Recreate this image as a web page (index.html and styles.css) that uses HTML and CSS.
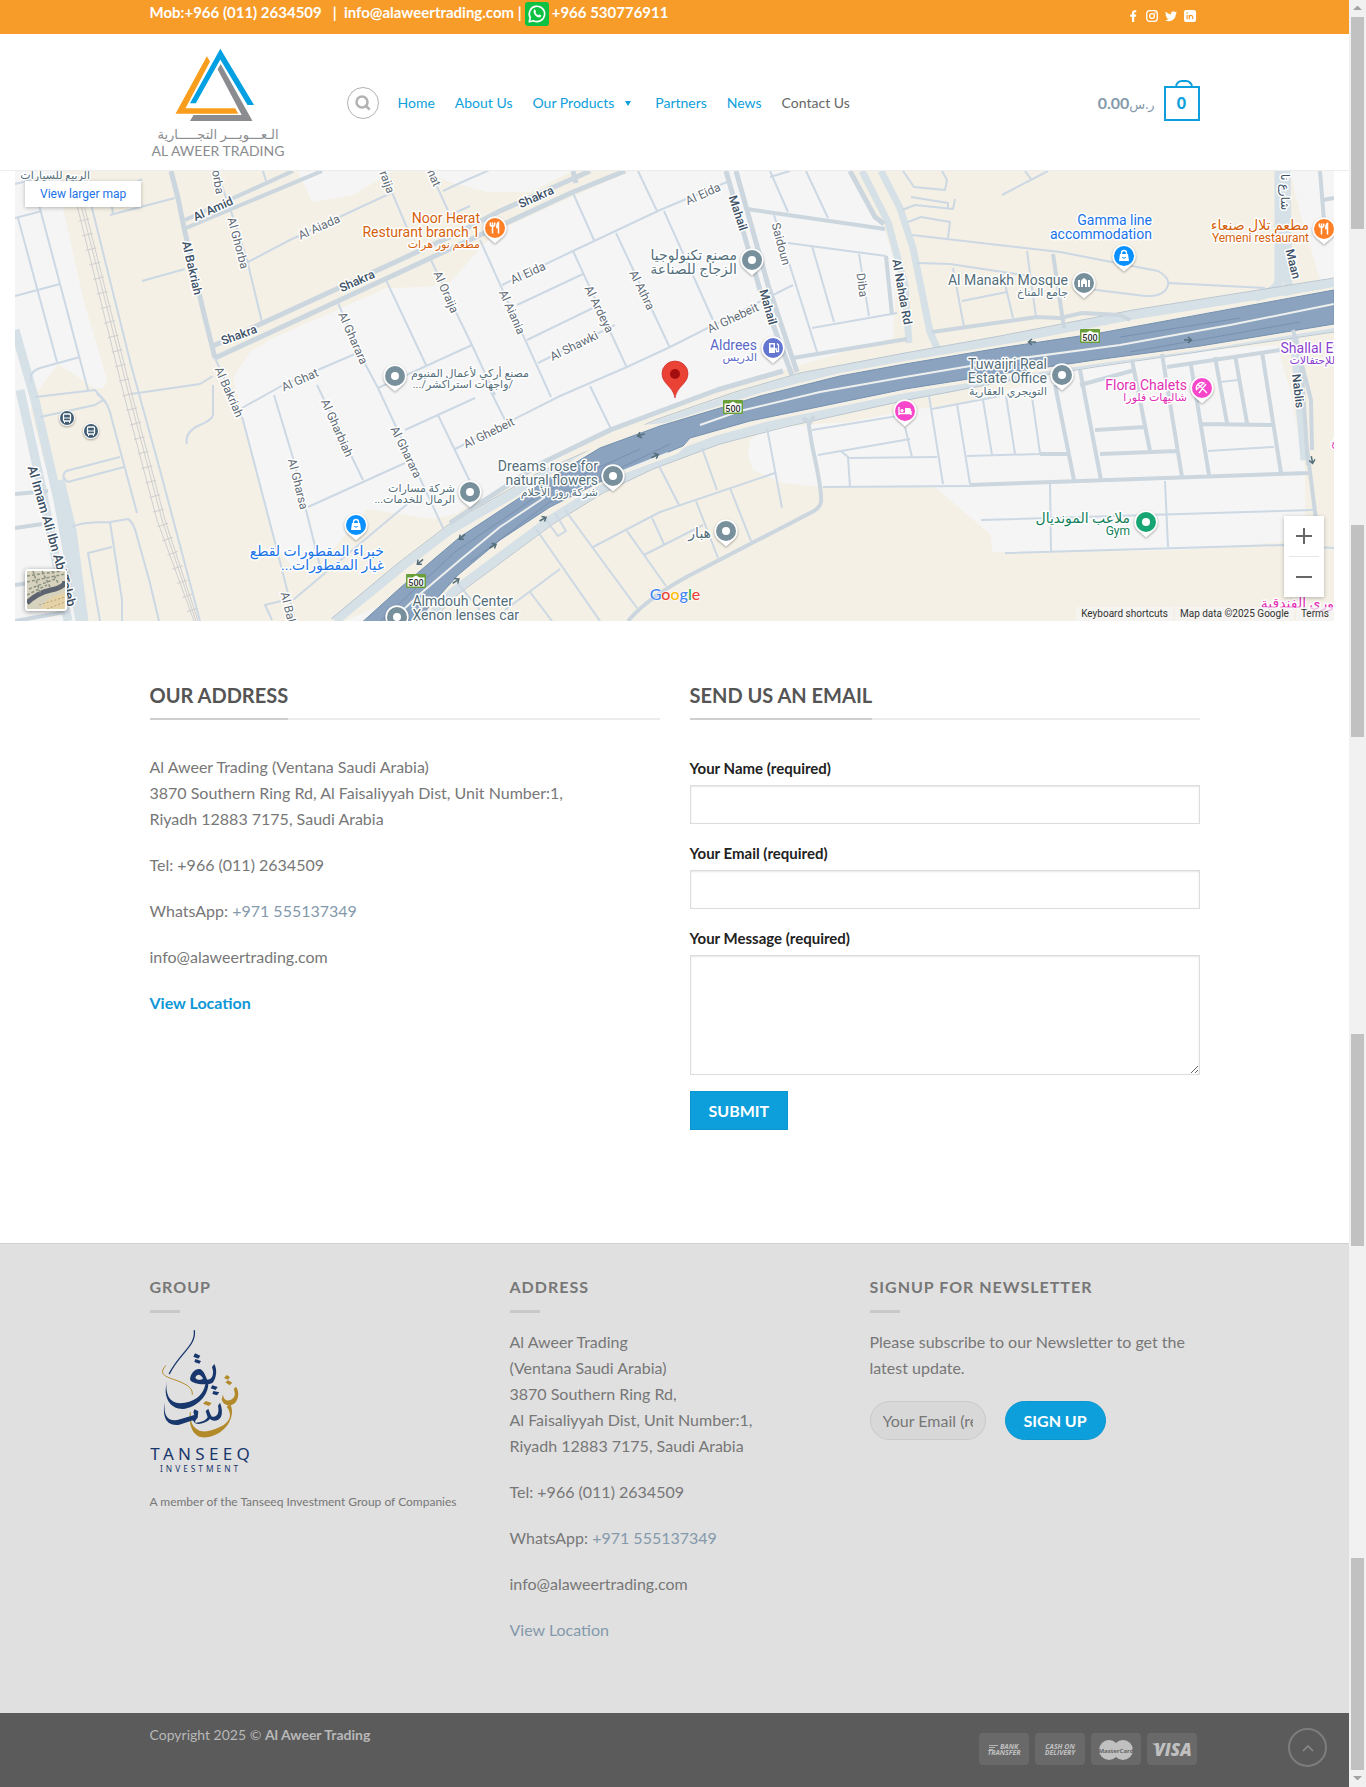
FILE: index.html
```html
<!DOCTYPE html>
<html lang="en">
<head>
<meta charset="utf-8">
<meta name="viewport" content="width=device-width, initial-scale=1">
<title>Contact Us - Al Aweer Trading</title>
<link rel="stylesheet" href="styles.css">
</head>
<body>
<div class="page">
  <div class="topbar">
    <div class="container topbar-row">
      <p class="topbar-contact"><span>Mob:+966 (011) 2634509 &nbsp; | &nbsp;info@alaweertrading.com |</span>
        <svg class="whatsapp" viewBox="0 0 24 24" aria-hidden="true"><rect width="24" height="24" rx="3" fill="#0dc143"/><path d="M4.2 19.8l1.1-4A7.7 7.7 0 1 1 8.300 18.700z" fill="none" stroke="#fff" stroke-width="1.600" stroke-linejoin="round"/><path d="M9.200 7.800c.5-.5 1-.3 1.200.2l.6 1.400c.2.5-.6 1-.5 1.300.6 1.200 1.500 2 2.700 2.500.4.1.9-.9 1.300-.7l1.500.8c.5.3.1 1.300-.5 1.800-1.200.9-3.600 0-5.200-1.600S7.900 9 9.200 7.800z" fill="#fff"/></svg>
        <span>+966 530776911</span></p>
      <div class="social">
        <a href="#" aria-label="Facebook"><svg viewBox="0 0 12 12"><path d="M5 12V6.700H3.200V4.600H5V3.100C5 1.200 6 .2 7.700.2h1.500v2H8.100c-.7 0-.9.3-.9 1v1.400h2l-.3 2.100H7.200V12z"/></svg></a>
        <a href="#" aria-label="Instagram"><svg viewBox="0 0 12 12"><rect x=".7" y=".7" width="10.600" height="10.600" rx="2.800" fill="none" stroke="#fff" stroke-width="1.300"/><circle cx="6" cy="6" r="2.400" fill="none" stroke="#fff" stroke-width="1.300"/><circle cx="9" cy="3" r=".8"/></svg></a>
        <a href="#" aria-label="Twitter"><svg viewBox="0 0 12 12"><path d="M12 2.500c-.4.200-.9.300-1.400.4.500-.3.900-.8 1.100-1.400-.5.300-1 .5-1.600.6A2.500 2.500 0 0 0 5.900 4.400 7 7 0 0 1 .8 1.800c-.7 1.200-.3 2.600.8 3.300-.4 0-.8-.1-1.100-.3 0 1.200.8 2.200 2 2.500-.4.100-.7.100-1.100 0 .3 1 1.200 1.700 2.300 1.700A5 5 0 0 1 0 10.100 7 7 0 0 0 10.800 3.900z"/></svg></a>
        <a href="#" aria-label="LinkedIn"><svg viewBox="0 0 12 12"><rect width="12" height="12" rx="2"/><path d="M3.100 5v4.300M5.300 9.300V5M5.300 7.200c0-2.200 3.400-2.500 3.400 0v2.100" fill="none" stroke="#f89c29" stroke-width="1.200"/><circle cx="3.100" cy="3.100" r=".8" fill="#f89c29"/></svg></a>
      </div>
    </div>
  </div>

  <header class="header">
    <div class="container header-row">
      <a class="logo" href="#" aria-label="Al Aweer Trading">
        <svg viewBox="150 47 136 112">
          <path fill="#f99d1c" d="M206.900 56.300L210 61.500 185.500 108.200H235.200L238.300 113.700H175.500z"/>
          <path fill="#00a0e3" d="M220.300 48.700L254 105H247.500L220.300 59.500 195.800 103.300H190z"/>
          <path fill="#8a8c8f" d="M220.700 64L252.500 121H190L193.500 115H241.700L217.600 69.300z"/>
          <text class="logo-text" x="218" y="139" font-size="13">الـعـــويـــر التجـــــارية</text>
          <text class="logo-text" x="218" y="156" font-size="14">AL AWEER TRADING</text>
        </svg>
      </a>
      <button class="search" aria-label="Search"><svg viewBox="0 0 16 16"><circle cx="7" cy="7" r="5.500"/><path d="M10.500 10.500l4.200 4.200"/></svg></button>
      <nav class="nav">
        <a href="#">Home</a>
        <a href="#">About Us</a>
        <a href="#">Our Products<span class="caret"></span></a>
        <a href="#">Partners</a>
        <a href="#">News</a>
        <a href="#" class="current">Contact Us</a>
      </nav>
      <a class="cart" href="#"><bdi dir="rtl">0.00<span>ر.س</span></bdi><strong class="bag">0</strong></a>
    </div>
  </header>

  <main>
    <section class="map" aria-label="Map">
      <svg class="map-canvas" viewBox="15 171 1319 450" preserveAspectRatio="xMidYMid slice">
        <defs>
          <path id="drop" d="M0 15.500L-7.500 9A11.700 11.700 0 1 1 7.500 9z"/>
          <g id="dot"><use href="#drop" fill="#fff" class="lift"/><circle r="10" fill="#78909c"/><circle r="4" fill="#fff"/></g>
          <g id="lock"><use href="#drop" fill="#fff" class="lift"/><circle r="10" fill="#0a91ff"/><path fill="#fff" d="M-5 5l1-7h8l1 7z"/><path fill="none" stroke="#fff" stroke-width="1.300" d="M-2.500-1.500V-3a2.500 2.500 0 0 1 5 0v1.500"/><path fill="none" stroke="#0a91ff" d="M-1.800 1a2 2 0 0 0 3.600 0"/></g>
          <g id="food"><use href="#drop" fill="#fff" class="lift"/><circle r="10" fill="#ff7f27"/><path fill="none" stroke="#fff" stroke-width="1.500" d="M-2.500-5.500V5.500M-4.700-5.500v2.300q0 1.500 2.200 1.500T-.3-3.200v-2.300M3.500 5.500v-11Q1.800-4.500 1.800-.5h1.700"/></g>
          <g id="bus"><circle r="8" fill="#fff" class="lift"/><circle r="7" fill="#3f5b72"/><rect x="-3.500" y="-4" width="7" height="7" rx="1" fill="none" stroke="#fff" stroke-width="1.300"/><path stroke="#fff" d="M-3.500 0h7M-2.500 3v2M2.500 3v2"/></g>
          <g id="shield"><rect x="-10" y="-7" width="20" height="14" rx="1" fill="#689f38"/><path fill="#fff" d="M-8.500 5.500v-9l5 0 3.500-2 3.500 2h5v9z"/><text text-anchor="middle" y="5" class="shield-no">500</text></g>
          <path id="arrow" fill="none" stroke="#546e7a" stroke-width="1.500" d="M-4 0h7M0-3l3.500 3L0 3"/>
        </defs>
        <rect x="15" y="171" width="1319" height="450" fill="#f5f5f5"/>
        <g fill="#f4f0e5">
          <path d="M58 171L63 208 83 298 107 380 104 388 95 388 75 375 58 364 38 391 30 410 60 520 85 621H345L450 575 460 513 433 519 367 509 333 550 293 567 277 550 233 378 250 352 273 338 387 288 427 287 450 282 463 268 483 245 510 225 630 171H573L530 192 487 192 450 182 420 171H393L353 195 312 202 298 171z"/>
          <path d="M390 621L460 510 610 432 717 392 800 365 893 338 897 270 883 225 850 171H1290L1300 212 1320 280 1334 282V621z"/>
        </g>
        <path fill="#f5f5f5" d="M750 440L767 428 817 424 850 422 910 410 960 404 1080 368 1167 353 1277 345 1290 390 1305 470V537L1283 542 1180 550 992 552 991 535 935 487H823L783 483 753 470 748 455z"/>
        <g class="road light">
          <path class="w9" d="M15 330L35 400 58 500 80 621M20 390L40 480 68 621M60 480L72 530 84 621"/>
          <path class="w7" d="M862 171L888 222 905 285 909 343M881 171L900 208 913 248 930 332 938 350"/>
          <path class="w9" d="M1279 171V280Q1278 292 1255 297M1286 171L1288 290 1295 345 1305 460"/>
          <path class="w9" d="M335 621L400 568 450 530 540 478 610 447 657 425 737 397 800 378 905 358 1000 341 1133 315 1334 283"/>
          <path class="w9" d="M427 618L450 594 550 520 600 489 650 465 717 440 783 422 905 396 1000 378 1093 362 1334 327"/>
        </g>
        <path class="edge" d="M331 619L397 564 448 525 538 473 608 442 655 420 735 392 800 373 905 353 1000 336 1133 310 1334 278M433 621L453 598 553 524 603 493 653 469 720 444 785 427 907 400 1002 382 1095 367 1334 332"/>
        <g class="highway">
          <path class="rim" d="M358 626L400 584 460 534 545 478 600 443 640 425 665 423 760 393 840 373 905 361 1000 345 1100 330 1334 287V328L1200 350 1095 364 1000 378 905 393 750 425 692 441 677 454 620 475 555 508 500 543 460 577 420 622z"/>
          <path class="deck" d="M358 626L400 588 460 537 545 481 600 448 660 426 760 396 840 376 905 364 1000 348 1100 333 1334 290V324L1200 346 1095 360 1000 374 905 389 750 421 690 438 683 446 620 472 550 507 500 540 458 575 412 626z"/>
          <path class="median" d="M386 626L420 594 460 560 500 527 545 497M623 471L668 453M700 425L740 411 820 392 905 377 1000 361 1120 345 1230 325 1334 304"/>
          <path class="lane" d="M375 626L455 552 540 494 640 449M470 562L550 502 670 444M1120 337L1240 318M1130 352L1300 322"/>
        </g>
        <g class="road">
          <path class="w5" d="M171 171L178 198 184 228 203 310 215 358"/>
          <path class="w5" d="M213 346L454 235 500 211 590 171M215 358L450 249 573 192 625 171M573 171l3 12"/>
          <path class="w4" d="M185 220L293 171M186 228L322 171M747 209L885 229M793 358L907 339M932 332L1037 317 1060 318 1082 313 1120 315 1130 320"/>
          <path class="w5" d="M450 523L540 464 610 430 717 390 783 371"/>
          <path class="w5" d="M726 171L760 290 792 375M736 171L768 285 797 372M850 171L875 217 884 224"/>
          <path class="w4" d="M886 256L892 315M1053 254L1064 328M15 494L48 491M15 528L42 524M15 585L50 580M15 621L65 612M1320 171l4 50M1323 200l11-2"/>
          <path class="w4" d="M808 420Q811 440 813 450 822 490 821 502 820 508 812 512L700 570Q650 595 628 621M803 418l7 5 4-7"/>
          <path class="w4" d="M970 485L1308 473M1040 454H1069M1095 430L1145 427M1100 454L1177 451M1200 424L1272 425M1055 385L1074 480M1080 370L1101 480M1132 360L1150 451M1162 354L1182 477M1191 365L1209 475M1215 357L1227 423M1235 355L1247 423M1262 352L1281 473M1080 385L1135 370M1167 367L1280 350M1306 440L1316 520M1293 330L1311 400 1312 450M1300 345L1308 465"/>
        </g>
        <g class="road thin">
          <path d="M215 358L243 420 277 550 295 621M216 171L229 205 247 260 262 322M248 262L290 240 391 193M383 171L410 235M430 171L450 215 470 206M443 191l17-8 50-22M263 171l3 10"/>
          <path d="M15 218L42 211M18 218L57 362M39 205L60 284 88 390M15 296L60 284M31 383Q28 372 40 368L80 357M15 184l40-10M110 215L175 198M113 213L110 197 142 179M142 281L185 269"/>
          <path d="M90 200L131 365 160 470 200 621M131 394L200 384 213 376M35 397L95 390 105 402M40 417L95 405 103 400M213 385V415Q212 420 200 425 184 432 187 444"/>
          <path d="M97 394Q108 400 112 420L137 513M120 457L66 471Q60 477 68 482L124 467M72 527Q80 522 110 522L128 519Q134 522 138 540 150 580 159 621M110 522L122 600V621M112 547L88 553 100 621M285 600L265 605 272 620"/>
          <path d="M338 303L363 360 378 388 444 530M386 280L426 365M242 408L285 384 355 354M378 388L472 345M431 260L450 300 472 345 495 395M274 395L293 458 321 570M317 385L363 480M308 507L405 463M405 430L475 398M438 415L475 492M490 390L505 420M293 600L412 500"/>
          <path d="M502 285L573 251 660 210 727 182M480 240L551 397M573 193L594 240M638 171L657 211M664 211L713 320M616 233L670 348M573 251L627 368M517 305L583 274M527 340L597 306M538 363L615 325M455 449L560 396 627 367 670 347 793 285M590 386L611 429"/>
          <path d="M770 171L788 212M806 171L828 218M770 177L790 171M774 215L817 352M788 243L886 256M812 246L834 322M859 254L869 316M812 328L897 313"/>
          <path d="M903 171L914 187 945 190 947 180 942 171M902 210L915 205 953 209 955 199M911 197L948 203V208M908 222L921 217 950 222 948 238M912 235L1060 252 1158 271Q1170 278 1168 285 1165 297 1145 296L1080 288M1169 283L1265 288M1002 195L1048 171M1025 171L1031 179M917 263L950 264 1030 276M953 268L964 327M962 301L1007 292M1002 271L1013 318M1027 251L1036 317"/>
          <path d="M823 487L970 486M967 456L1040 454M1208 451L1274 447M929 396L943 484M957 404L970 484M983 400L992 455M1006 396L1015 454M1031 390L1040 453M932 409L1000 396M905 427L912 457M1050 484L1051 551M1165 481L1168 547M981 520L1314 510M1005 553L1284 545 1334 548M1220 382L1238 380"/>
          <path d="M812 430L910 414M818 455L910 439M841 451L848 457 850 487M848 458L937 457M767 428L782 508M593 547L660 512 775 473M702 448L717 490M659 466L679 505M730 488L751 541M696 501L718 558M652 518L664 544M644 555L703 525M627 531L666 586M565 510L637 608M536 529L600 621M505 610L560 569M530 592L552 621M458 584L480 610M546 520L558 536 566 531 555 513"/>
        </g>
        <g class="rail"><path d="M77 205L124 395 157 520 194 621M81 205L129 395 162 520 196 621M84 205L132 395 165 520 198 621"/><path class="ties" d="M80 205L128 395 161 520 196 621"/></g>
        <use href="#arrow" transform="translate(641 435) rotate(160)"/><use href="#arrow" transform="translate(655 456) rotate(-25)"/>
        <use href="#arrow" transform="translate(543 519) rotate(-30)"/><use href="#arrow" transform="translate(493 546) rotate(-30)"/>
        <use href="#arrow" transform="translate(462 537) rotate(140)"/><use href="#arrow" transform="translate(456 581) rotate(-35)"/>
        <use href="#arrow" transform="translate(420 562) rotate(140)"/><use href="#arrow" transform="translate(1032 342) rotate(180)"/>
        <use href="#arrow" transform="translate(1188 340)"/><use href="#arrow" transform="translate(1312 460) rotate(80)"/>

        <g class="street">
          <text transform="translate(218 182) rotate(80)">orba</text><text transform="translate(238 243) rotate(75)">Al Ghorba</text>
          <text transform="translate(319 227) rotate(-24)">Al Aiada</text><text transform="translate(353 338) rotate(66)">Al Gharara</text>
          <text transform="translate(446 292) rotate(66)">Al Oraija</text><text transform="translate(300 380) rotate(-24)">Al Ghat</text>
          <text transform="translate(229 392) rotate(66)">Al Bakriah</text><text transform="translate(387 182) rotate(70)">raija</text>
          <text transform="translate(434 178) rotate(66)">hat</text><text transform="translate(337 428) rotate(66)">Al Gharbiah</text>
          <text transform="translate(406 452) rotate(64)">Al Gharara</text><text transform="translate(298 484) rotate(76)">Al Gharsa</text>
          <text transform="translate(288 607) rotate(76)">Al Bal</text><text transform="translate(703 194) rotate(-24)">Al Eida</text>
          <text transform="translate(528 273) rotate(-24)">Al Eida</text><text transform="translate(512 312) rotate(66)">Al Aiania</text>
          <text transform="translate(599 309) rotate(64)">Al Ardeya</text><text transform="translate(642 290) rotate(64)">Al Athra</text>
          <text transform="translate(574 346) rotate(-26)">Al Shawki</text><text transform="translate(733 318) rotate(-25)">Al Ghebeit</text>
          <text transform="translate(489 433) rotate(-26)">Al Ghebeit</text><text transform="translate(781 244) rotate(75)">Saidoun</text>
          <text transform="translate(862 285) rotate(83)">Diba</text>
        </g>
        <g class="street major">
          <text transform="translate(213 209) rotate(-24)">Al Amid</text><text transform="translate(192 268) rotate(77)">Al Bakriah</text>
          <text transform="translate(357 281) rotate(-24)">Shakra</text><text transform="translate(239 335) rotate(-20)">Shakra</text>
          <text transform="translate(536 197) rotate(-24)">Shakra</text><text transform="translate(738 213) rotate(72)">Mahail</text>
          <text transform="translate(768 307) rotate(74)">Mahail</text><text transform="translate(902 292) rotate(80)">Al Nahda Rd</text>
          <text transform="translate(1293 264) rotate(76)">Maan</text><text transform="translate(1298 391) rotate(83)">Nablis</text>
          <text transform="translate(1285 192) rotate(90)">شارع نا</text><text transform="translate(52 536) rotate(74)" class="wide">Al Imam Ali Ibn Abi Taleb</text>
        </g>
        <g class="poi slate">
          <text class="ar" x="90" y="179">الربيع للسيارات</text>
          <text class="ar" x="529" y="377">مصنع أركي لأعمال المنيوم</text><text class="ar" x="513" y="388">/واجهات استراكشر/...</text>
          <text class="ar" x="455" y="492">شركة مسارات</text><text class="ar" x="455" y="503">الرمال للخدمات...</text>
          <text x="598" y="471">Dreams rose for</text><text x="598" y="485">natural flowers</text><text class="ar" x="598" y="496">شركة روز الأحلام</text>
          <text class="ar big" x="737" y="260">مصنع تكنولوجيا</text><text class="ar big" x="737" y="274">الزجاج للصناعة</text>
          <text class="ar big" x="711" y="538">هبار</text>
          <text x="1068" y="285">Al Manakh Mosque</text><text class="ar" x="1068" y="296">جامع المناخ</text>
          <text x="1047" y="369">Tuwaijri Real</text><text x="1047" y="383">Estate Office</text><text class="ar" x="1047" y="395">التويجري العقارية</text>
          <text x="513" y="606">Almdouh Center</text><text x="519" y="620">Xenon lenses car</text>
        </g>
        <g class="poi orange">
          <text x="480" y="223">Noor Herat</text><text x="480" y="237">Resturant branch 1</text><text class="ar" x="480" y="248">مطعم نور هرات</text>
          <text class="ar big" x="1309" y="230">مطعم تلال صنعاء</text><text class="small" x="1309" y="242">Yemeni restaurant</text>
        </g>
        <g class="poi blue">
          <text x="1152" y="225">Gamma line</text><text x="1152" y="239">accommodation</text>
          <text class="ar big" x="384" y="556">خبراء المقطورات لقطع</text><text class="ar big" x="384" y="570">غيار المقطورات...</text>
        </g>
        <g class="poi violet"><text x="757" y="350">Aldrees</text><text class="ar" x="757" y="361">الدريس</text></g>
        <g class="poi pink"><text x="1187" y="390">Flora Chalets</text><text class="ar" x="1187" y="401">شاليهات فلورا</text><text class="ar" x="1338" y="446">خ</text><text class="ar big" x="1334" y="608">وري الفندقية</text></g>
        <g class="poi purple"><text x="1340" y="353">Shallal Ev</text><text class="ar" x="1335" y="364">للإحتفالات</text></g>
        <g class="poi green"><text class="ar big" x="1130" y="523">ملاعب المونديال</text><text class="small" x="1130" y="535">Gym</text></g>

        <use href="#dot" x="395" y="376"/><use href="#dot" x="470" y="492"/><use href="#dot" x="613" y="476"/><use href="#dot" x="397" y="617"/>
        <use href="#dot" x="752" y="260"/><use href="#dot" x="726" y="531"/><use href="#dot" x="1062" y="375"/>
        <use href="#lock" x="1124" y="256"/><use href="#lock" x="356" y="525"/>
        <use href="#food" x="495" y="228"/><use href="#food" x="1324" y="229"/>
        <use href="#bus" x="67" y="418"/><use href="#bus" x="91" y="431"/>
        <use href="#shield" x="1090" y="336"/><use href="#shield" x="733" y="407"/><use href="#shield" x="416" y="581"/>
        <g transform="translate(1084 283)"><use href="#drop" fill="#fff" class="lift"/><circle r="10" fill="#78909c"/><path fill="#fff" d="M-6-3h2v7h-2zM4-3h2v7H4zM-3 4v-6q0-1 3-3 3 2 3 3v6H1V1h-2v3z"/></g>
        <g transform="translate(773 348)"><use href="#drop" fill="#fff" class="lift"/><circle r="10" fill="#6374d1"/><path fill="#fff" d="M-4-5h6V5h-6z"/><path fill="none" stroke="#fff" stroke-width="1.300" d="M2 1h1.500v2.500H5.500V-3L4-4.500"/><path fill="#6374d1" d="M-2.500-3.500h3v3h-3z"/></g>
        <g transform="translate(905 411)"><use href="#drop" fill="#fff" class="lift"/><circle r="10" fill="#f846cb"/><path fill="none" stroke="#fff" stroke-width="1.400" d="M-6-4v8M-6 2.500H6M6 4V0"/><path fill="#fff" d="M0-3h4q2 0 2 2v3H0z"/><circle cx="-3" cy="-.5" r="1.600" fill="#fff"/></g>
        <g transform="translate(1202 388)"><use href="#drop" fill="#fff" class="lift"/><circle r="10" fill="#f846cb"/><path fill="none" stroke="#fff" stroke-width="1.300" d="M-5.500 1.500A5.500 5.500 0 0 1 2-5zM-4-3.500l2.500 2.500M-1.500-1.500L5 5M4-4L-3 5"/></g>
        <g transform="translate(1146 522)"><use href="#drop" fill="#fff" class="lift"/><circle r="10" fill="#17a673"/><circle r="4" fill="#fff"/></g>
        <path d="M675 398C673 386 662 384 662 373.500A13 12.500 0 0 1 688 373.500C688 384 677 386 675 398z" fill="#ea4335" stroke="#c5221f" stroke-width=".6"/><circle cx="675" cy="374" r="5" fill="#a50e0e"/>
        <text class="google" x="675" y="600" text-anchor="middle"><tspan fill="#4285f4">G</tspan><tspan fill="#ea4335">o</tspan><tspan fill="#fbbc04">o</tspan><tspan fill="#4285f4">g</tspan><tspan fill="#34a853">l</tspan><tspan fill="#ea4335">e</tspan></text>
      </svg>
      <a class="map-larger" href="#">View larger map</a>
      <button class="map-satellite" aria-label="Show satellite imagery">
        <svg viewBox="0 0 38 38"><rect width="38" height="38" fill="#d6d2bd"/><path fill="#e6d3a5" d="M14 38Q18 26 38 22V38z"/><path fill="none" stroke="#5d6470" stroke-width="5" d="M0 32Q10 22 24 19T38 10"/><path fill="none" stroke="#8b9182" stroke-width="1.500" stroke-dasharray="3 2" d="M0 5L34 0M0 11L38 3M2 18L28 8M0 24L20 14M6 0L14 24M15 0L24 18M25 0L32 14"/><path fill="none" stroke="#b19f7e" stroke-dasharray="2 2" d="M12 34L38 26M20 38L38 31"/></svg>
      </button>
      <div class="map-zoom"><button aria-label="Zoom in"><svg viewBox="0 0 18 18"><path d="M9 1v16M1 9h16"/></svg></button><button aria-label="Zoom out"><svg viewBox="0 0 18 18"><path d="M1 9h16"/></svg></button></div>
      <div class="map-legal"><a href="#">Keyboard shortcuts</a><span>Map data ©2025 Google</span><a href="#">Terms</a></div>
    </section>

    <section class="container contact">
      <div class="contact-col">
        <h3 class="section-title"><span>OUR ADDRESS</span></h3>
        <div class="copy">
          <p>Al Aweer Trading (Ventana Saudi Arabia)<br>3870 Southern Ring Rd, Al Faisaliyyah Dist, Unit Number:1,<br>Riyadh 12883 7175, Saudi Arabia</p>
          <p>Tel: +966 (011) 2634509</p>
          <p>WhatsApp: <a href="#">+971 555137349</a></p>
          <p>info@alaweertrading.com</p>
          <p><a class="location" href="#">View Location</a></p>
        </div>
      </div>
      <div class="contact-col">
        <h3 class="section-title"><span>SEND US AN EMAIL</span></h3>
        <form class="mail-form">
          <label for="name">Your Name (required)</label>
          <input id="name" type="text">
          <label for="email">Your Email (required)</label>
          <input id="email" type="email">
          <label for="message">Your Message (required)</label>
          <textarea id="message"></textarea>
          <button class="btn" type="button">SUBMIT</button>
        </form>
      </div>
    </section>
  </main>

  <footer>
    <div class="widgets">
      <div class="container widget-row">
        <div class="widget">
          <h4>GROUP</h4>
          <svg class="tanseeq" viewBox="60 294 306 441" role="img" aria-label="Tanseeq Investment">
            <g fill="none" stroke-linecap="round">
              <g stroke="#b28a2a">
                <path stroke-width="3" d="M107 404C88 425 98 434 130 445S190 468 187 490"/>
                <path stroke-width="3" d="M181 545C176 580 190 602 212 608"/>
              </g>
              <path stroke="#18376c" stroke-width="4" d="M193 299C198 345 150 365 118 428"/>
            </g>
            <g fill="#b28a2a">
              <path d="M181 560C185 590 205 603 230 601 270 594 300 575 300 553 300 540 294 532 290 528L300 518C310 535 308 560 292 583 270 612 240 621 215 619 190 613 178 588 181 560z"/>
              <path d="M279 490C280 510 296 514 309 502 318 494 314 482 311 474L318 467C328 480 327 503 315 516 300 530 278 522 275 505z"/>
              <path d="M290 432l10 6-6 8-12-5zM286 454l8-6 13 7-8 8zM219 518l8-8 18 6-8 9z"/>
            </g>
            <g fill="#18376c">
              <path d="M110 448C105 490 118 516 150 517 190 515 220 495 226 460L235 456C236 495 200 530 158 534 122 534 106 505 107 475z"/>
              <path fill-rule="evenodd" d="M180 445C182 425 198 410 212 415 223 421 228 440 232 446 244 446 250 435 249 420L246 408 253 399C262 415 260 440 248 455 235 463 184 462 180 445zM196 440C202 449 213 447 219 443 213 431 202 426 196 440z"/>
              <path d="M104 516C100 560 118 574 150 565L193 552C189 545 190 540 194 535L205 541 203 560C196 568 192 574 198 575 215 574 228 568 233 559L227 540 235 533C242 552 244 559 252 557 264 554 268 542 264 524L270 515C278 535 279 558 265 566 253 572 245 568 240 564 230 575 207 582 196 577 190 573 192 566 184 569L148 581C110 587 96 558 104 516z"/>
              <path d="M195 367l16 7-6 9-15-6zM196 384l17 6-5 8-15-5zM247 463l16 5-6 9-15-5zM250 480l18 4-7 9-14-4z"/>
            </g>
            <text class="brand" x="61" y="687">TANSEEQ</text>
            <text class="brand-sub" x="90" y="722">INVESTMENT</text>
          </svg>
          <p class="caption">A member of the Tanseeq Investment Group of Companies</p>
        </div>
        <div class="widget copy">
          <h4>ADDRESS</h4>
          <p>Al Aweer Trading<br>(Ventana Saudi Arabia)<br>3870 Southern Ring Rd,<br>Al Faisaliyyah Dist, Unit Number:1,<br>Riyadh 12883 7175, Saudi Arabia</p>
          <p>Tel: +966 (011) 2634509</p>
          <p>WhatsApp: <a href="#">+971 555137349</a></p>
          <p>info@alaweertrading.com</p>
          <p><a href="#">View Location</a></p>
        </div>
        <div class="widget copy">
          <h4>SIGNUP FOR NEWSLETTER</h4>
          <p>Please subscribe to our Newsletter to get the latest update.</p>
          <form class="newsletter">
            <input type="email" placeholder="Your Email (required)" aria-label="Your Email (required)">
            <button class="btn round" type="button">SIGN UP</button>
          </form>
        </div>
      </div>
    </div>
    <div class="legal">
      <div class="container legal-row">
        <p>Copyright 2025 © <strong>Al Aweer Trading</strong></p>
        <div class="payments">
          <svg viewBox="0 0 50 32" role="img" aria-label="Bank transfer"><rect width="50" height="32" rx="4"/><path stroke="#b5b5b5" d="M10 12.500h9M10 14.500h6M10 16.500h4"/><text x="21" y="16" class="pay">BANK</text><text x="25" y="22" text-anchor="middle" class="pay">TRANSFER</text></svg>
          <svg viewBox="0 0 50 32" role="img" aria-label="Cash on delivery"><rect width="50" height="32" rx="4"/><text x="25" y="16" text-anchor="middle" class="pay">CASH ON</text><text x="25" y="22" text-anchor="middle" class="pay">DELIVERY</text></svg>
          <svg viewBox="0 0 50 32" role="img" aria-label="MasterCard"><rect width="50" height="32" rx="4"/><g fill="#c0c0c0"><circle cx="18" cy="17" r="10"/><circle cx="32" cy="17" r="10"/></g><text x="25" y="20" text-anchor="middle" class="pay mc">MasterCard</text></svg>
          <svg viewBox="0 0 50 32" role="img" aria-label="Visa"><rect width="50" height="32" rx="4"/><path fill="#c0c0c0" d="M5 10.500h6l2 5z"/><text x="26" y="23" text-anchor="middle" class="visa">VISA</text></svg>
        </div>
      </div>
      <a class="to-top" href="#" aria-label="Back to top"><svg viewBox="0 0 12 8"><path d="M1 7l5-5 5 5"/></svg></a>
    </div>
  </footer>
</div>
<div class="scrollbar" aria-hidden="true">
  <i class="arrow-up"></i><b></b><i class="gap-a"></i><b></b><i class="gap-a"></i><b></b><i class="gap-b"></i><b></b><i class="arrow-down"></i>
</div>
</body>
</html>
```
FILE: styles.css
```css
* { box-sizing: border-box; }
body {
  margin: 0;
  display: flex;
  background: #fff;
  color: #777;
  font: 16px/26px Lato, "DejaVu Sans", sans-serif;
}
p, h3, h4 { margin: 0; }
a { color: #8499ab; text-decoration: none; }
button { font: inherit; cursor: pointer; }
input, textarea { font: inherit; color: #333; }
.page { flex: 1; min-width: 0; }
.container { max-width: 1080px; margin: 0 auto; padding: 0 15px; }

/* Top bar */
.topbar { background: #f89c29; color: #fff; }
.topbar-row { display: flex; justify-content: space-between; height: 34px; }
.topbar-contact { display: flex; gap: 3px; font-size: 15px; font-weight: 700; line-height: 24px; }
.whatsapp { width: 24px; height: 24px; margin-top: 2px; }
.social { display: flex; align-items: center; gap: 7px; padding: 0 4px 2px; }
.social a { display: flex; }
.social svg { width: 12px; height: 12px; fill: #fff; }

/* Header */
.header { border-bottom: 1px solid #ececec; }
.header-row { display: flex; align-items: center; height: 136px; padding-top: 2px; }
.logo { width: 136px; margin-right: 61px; }
.logo svg { display: block; width: 136px; height: 112px; }
.logo-text { fill: #8a8c8f; text-anchor: middle; font-family: Lato, "DejaVu Sans", sans-serif; }
.search {
  display: flex; align-items: center; justify-content: center;
  width: 32px; height: 32px; padding: 0; margin-right: 19px;
  border: 1px solid #b2b2b2; border-radius: 50%; background: none;
}
.search svg { width: 16px; height: 16px; fill: none; stroke: #b2b2b2; stroke-width: 2.500; }
.nav { display: flex; gap: 20px; font-size: 14px; }
.nav a { color: #0d9fdb; }
.nav .current { color: #666; }
.caret { display: inline-block; margin: 0 4px 2px 11px; border: 3px solid transparent; border-top: 5px solid #0d9fdb; border-bottom: 0; }
.cart { display: flex; align-items: center; gap: 9px; margin-left: auto; font-weight: 700; }
.cart bdi { direction: ltr; unicode-bidi: isolate-override; }
.cart bdi span { unicode-bidi: isolate; font-size: 13px; font-weight: 400; }
.bag {
  position: relative; width: 36px; height: 35px;
  border: 2px solid #0d9fdb; color: #0d9fdb; text-align: center; line-height: 30px;
}
.bag::before {
  content: ""; position: absolute; left: 9px; bottom: 100%; width: 14px; height: 6px;
  border: 2px solid #0d9fdb; border-bottom: 0; border-radius: 7px 7px 0 0;
}

/* Map */
.map { position: relative; height: 450px; margin: 0 15px; overflow: hidden; font-family: Roboto, "DejaVu Sans", sans-serif; }
.map-canvas { display: block; width: 100%; height: 100%; }
.road, .edge, .rail, .median, .lane { fill: none; stroke: #cbd6de; stroke-linejoin: round; }
.road.light { stroke: #d6e0e7; }
.road.thin { stroke: #ccd8e4; stroke-width: 2; }
.w4 { stroke-width: 4; }
.w5 { stroke-width: 5; }
.w7 { stroke-width: 7; }
.w9 { stroke-width: 9; }
.edge { stroke: #b9c6d0; stroke-width: 1; }
.rim { fill: #f4f0e5; }
.deck { fill: #8ba3bf; stroke: #7490b0; stroke-width: 1; }
.median { stroke: #eef0ee; stroke-width: 2; }
.lane { stroke: #7891b0; stroke-width: 1; }
.rail { stroke: #cfcfd2; stroke-width: 1; }
.ties { stroke-width: 11; stroke-dasharray: 1 14; }
.lift { filter: drop-shadow(0 1px 1px #0005); }
.street text, .poi text { paint-order: stroke; stroke: #fff; stroke-width: 3px; stroke-linejoin: round; }
.street text { fill: #5f6b76; font-size: 12px; text-anchor: middle; dominant-baseline: central; }
.street.major text { fill: #3c5166; font-weight: 500; }
.street.major .wide { font-size: 13px; }
.poi text { font-size: 14px; text-anchor: end; }
.poi .small { font-size: 12px; }
.poi .ar { direction: rtl; text-anchor: start; font-size: 11px; }
.poi .ar.big { font-size: 14px; }
.slate { fill: #546e7a; }
.orange { fill: #d65f0c; }
.blue { fill: #1a73e8; }
.violet { fill: #5a68c8; }
.pink { fill: #e22fb4; }
.purple { fill: #8a3fd1; }
.green { fill: #13805a; }
.shield-no { font-size: 9px; font-weight: 500; fill: #333; }
.google { font: 500 16px Lato, sans-serif; paint-order: stroke; stroke: #fff; stroke-width: 1px; }
.map-larger {
  position: absolute; left: 10px; top: 10px; padding: 0 15px;
  background: #fff; color: #1a73e8; font-size: 12px; box-shadow: 0 1px 4px #0004;
}
.map-satellite { position: absolute; left: 10px; bottom: 10px; width: 42px; height: 42px; padding: 0; border: 2px solid #fff; border-radius: 3px; box-shadow: 0 1px 5px #0006; }
.map-satellite svg { display: block; width: 38px; height: 38px; }
.map-zoom { position: absolute; right: 10px; bottom: 24px; width: 40px; padding: 0 5px; background: #fff; box-shadow: 0 1px 4px #0004; }
.map-zoom button { display: flex; align-items: center; justify-content: center; width: 30px; height: 40px; padding: 0; border: 0; background: none; }
.map-zoom button + button { height: 41px; border-top: 1px solid #e6e6e6; }
.map-zoom svg { width: 18px; height: 18px; stroke: #666; stroke-width: 2; }
.map-legal { position: absolute; right: 0; bottom: 0; display: flex; gap: 2px; font-size: 10px; line-height: 14px; }
.map-legal > * { padding: 0 5px; background: #f5f5f5b3; color: #333; }

/* Address and mail form */
.contact { display: grid; grid-template-columns: 1fr 1fr; gap: 30px; padding-top: 61px; padding-bottom: 113px; }
.section-title { display: flex; margin-bottom: 34px; border-bottom: 2px solid #ececec; color: #555; font-size: 20px; }
.section-title span { margin-bottom: -2px; padding-bottom: 10px; border-bottom: 2px solid #cfcfcf; }
.copy p + p { margin-top: 20px; }
.location { color: #0d97d6; font-weight: 700; }
.mail-form { padding-top: 3px; }
.mail-form label { display: block; margin-bottom: 6px; color: #222; font-size: 15px; font-weight: 700; line-height: 22px; }
.mail-form input, .mail-form textarea {
  display: block; width: 100%; height: 39px; margin-bottom: 18px; padding: 0 12px;
  border: 1px solid #ddd; border-radius: 0; background: #fff; box-shadow: inset 0 1px 2px #0000001a;
}
.mail-form textarea { height: 120px; margin-bottom: 16px; padding: 12px; }
.btn { height: 39px; padding: 0 18px; border: 1px solid #0b96cf; background: #0d9fdb; color: #fff; font-weight: 700; line-height: 37px; }
.round { border-radius: 99px; }

/* Footer */
.widgets { border-top: 1px solid #d0d0d0; background: #e0e0e0; }
.widget-row { display: grid; grid-template-columns: repeat(3, 1fr); gap: 30px; padding-top: 31px; padding-bottom: 70px; }
.widget h4 { font-size: 16px; line-height: 24px; letter-spacing: 1px; }
.widget h4::after { content: ""; display: block; width: 30px; height: 3px; margin: 11px 0 16px; background: #c8c8c8; }
.tanseeq { display: block; width: 102px; height: 147px; margin-bottom: 16px; }
.brand, .brand-sub { fill: #18376c; font-family: "Noto Sans", sans-serif; }
.brand { font-size: 51px; letter-spacing: 13px; }
.brand-sub { font-size: 25px; letter-spacing: 9px; }
.caption { font-size: 12px; line-height: 20px; }
.newsletter { display: flex; gap: 19px; margin-top: 20px; }
.newsletter input { width: 116px; height: 39px; padding: 0 12px; border: 1px solid #c9c9c9; border-radius: 99px; background: #d8d8d8; }
.newsletter input::placeholder { color: #777; }
.legal { position: relative; background: #5b5b5b; color: #b8b8b8; font-size: 14px; }
.legal-row { display: flex; justify-content: space-between; padding-top: 9px; padding-bottom: 22px; }
.payments { display: flex; gap: 6px; padding: 11px 3px 0; }
.payments svg { width: 50px; height: 32px; }
.payments rect { fill: #696969; }
.pay { font: italic 700 7px "Open Sans", sans-serif; fill: #c0c0c0; }
.pay.mc { fill: #666; font-size: 6px; font-style: normal; }
.visa { font: italic 800 17px "Open Sans", sans-serif; fill: #c0c0c0; }
.to-top {
  position: absolute; right: 22px; bottom: 20px; display: flex; align-items: center; justify-content: center;
  width: 39px; height: 39px; border: 2px solid #7d7d7d; border-radius: 50%;
}
.to-top svg { width: 12px; height: 8px; fill: none; stroke: #8a8a8a; stroke-width: 1.500; }

/* Scroll track */
.scrollbar { display: flex; flex-direction: column; width: 17px; background: #f1f1f1; }
.scrollbar b { flex: 212; margin: 0 2px; background: #c1c1c1; }
.gap-a { flex: 296; }
.gap-b { flex: 312; }
.arrow-up, .arrow-down { height: 17px; padding: 6px 4px; }
.arrow-up::before, .arrow-down::before { content: ""; display: block; border: 4px solid transparent; }
.arrow-up::before { border-top: 0; border-bottom-color: #a3a3a3; }
.arrow-down::before { border-bottom: 0; border-top-color: #a3a3a3; }
```
